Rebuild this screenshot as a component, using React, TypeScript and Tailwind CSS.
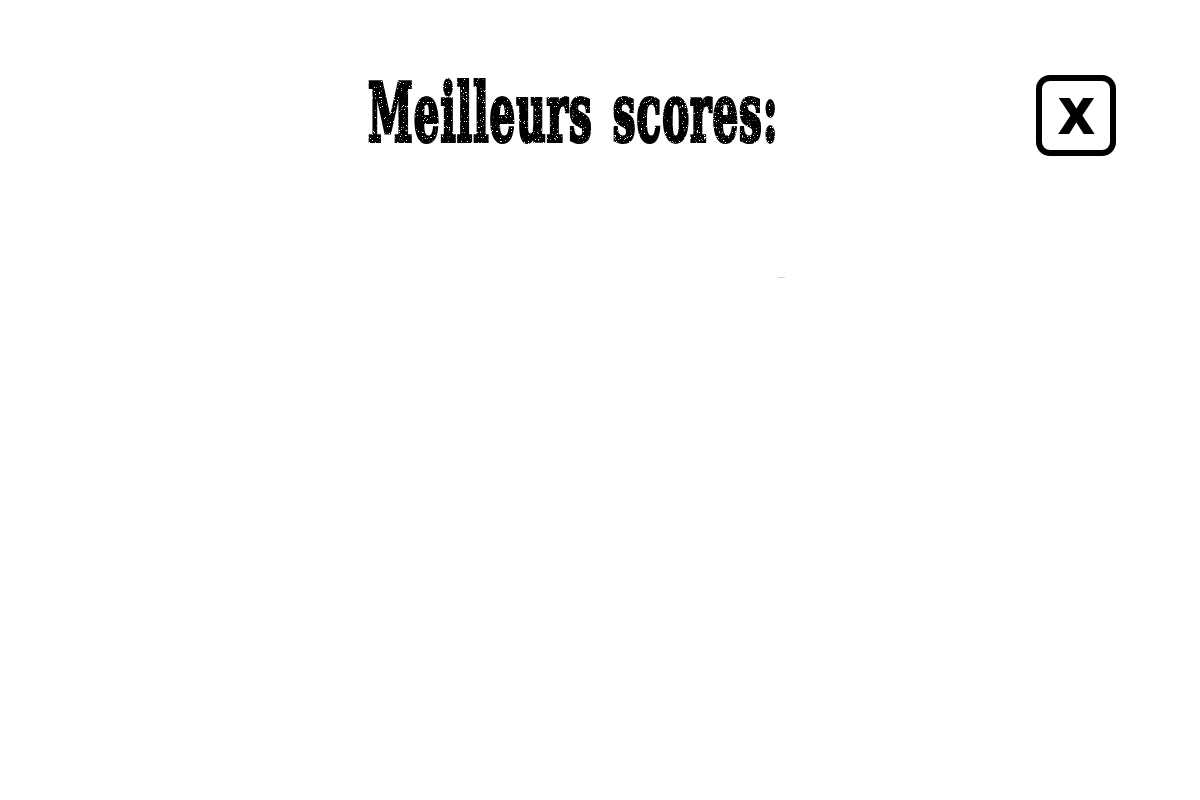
export default function App() {
  return (
    <div className="relative h-[800px] w-[1200px] overflow-hidden bg-white">
      <svg className="absolute h-0 w-0" aria-hidden="true">
        <filter id="worn" x="0" y="0" width="100%" height="100%">
          <feTurbulence type="fractalNoise" baseFrequency="0.8" numOctaves="2" seed="7" result="noise" />
          <feColorMatrix
            in="noise"
            type="matrix"
            values="0 0 0 0 0  0 0 0 0 0  0 0 0 0 0  0 0 0 -14 10.4"
            result="specks"
          />
          <feComposite in="SourceGraphic" in2="specks" operator="in" />
        </filter>
      </svg>

      <header className="flex items-start pl-[368px] pt-[75px]">
        <div className="w-[668px]">
          <h1 className="origin-top-left scale-x-[0.505] whitespace-nowrap font-['DejaVu_Serif',serif] text-[80px] leading-[76px] font-bold tracking-[2px] text-black [-webkit-text-stroke:4px_black] [word-spacing:10px] [filter:url(#worn)]">
            Meilleurs scores:
          </h1>
        </div>
        <button className="flex h-[81px] w-[80px] items-center justify-center rounded-[14px] border-[6px] border-black bg-white font-['DejaVu_Sans',sans-serif] text-[66px] leading-none font-bold text-black">
          <span className="-mt-[8px] scale-x-90">x</span>
        </button>
      </header>

      <div className="absolute top-[277px] left-[778px] h-px w-[7px] bg-gray-300" />
    </div>
  );
}
